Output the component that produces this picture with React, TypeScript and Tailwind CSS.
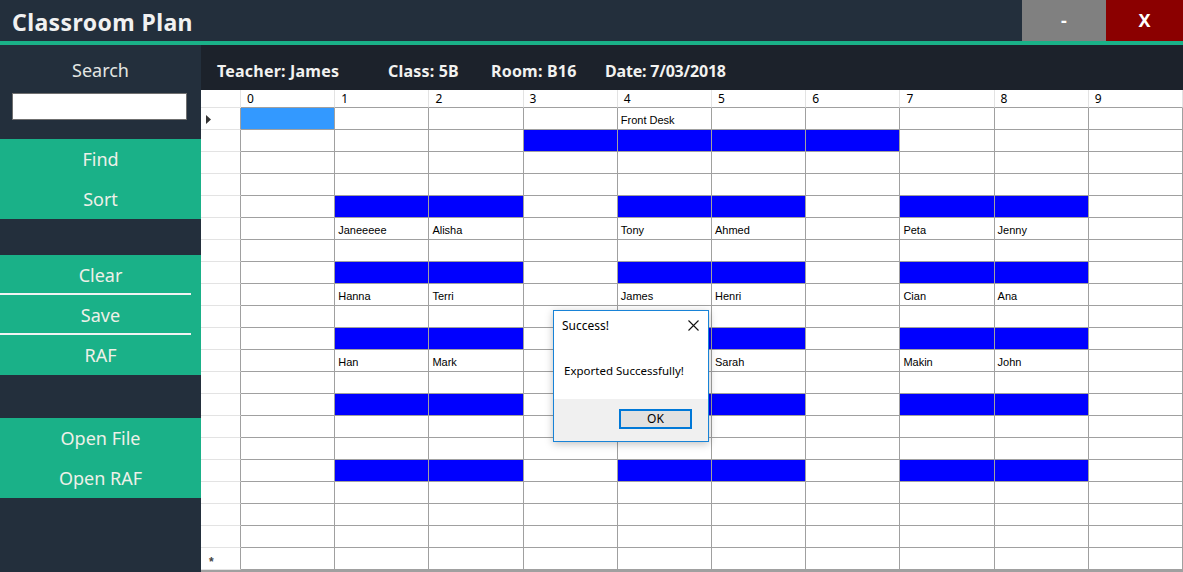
import React from "react";

type Cell = string;
const E: Cell[] = ["", "", "", "", "", "", "", "", "", ""];
const B: Cell[] = ["", "#", "#", "", "#", "#", "", "#", "#", ""];
const rows: Cell[][] = [
  ["@", "", "", "", "Front Desk", "", "", "", "", ""],
  ["", "", "", "#", "#", "#", "#", "", "", ""],
  E,
  E,
  B,
  ["", "Janeeeee", "Alisha", "", "Tony", "Ahmed", "", "Peta", "Jenny", ""],
  E,
  B,
  ["", "Hanna", "Terri", "", "James", "Henri", "", "Cian", "Ana", ""],
  E,
  B,
  ["", "Han", "Mark", "", "", "Sarah", "", "Makin", "John", ""],
  E,
  B,
  E,
  E,
  B,
  E,
  E,
  E,
  E,
];

const gothic = { fontFamily: '"Noto Sans", "DejaVu Sans", sans-serif' };

function SideBtn({ label, line }: { label: string; line?: boolean }) {
  return (
    <div className="relative h-[40px] flex items-center justify-center text-[18px] text-[#eef0e8]">
      {label}
      {line && <div className="absolute left-0 bottom-0 w-[191px] h-[2px] bg-[#f2f2f2]" />}
    </div>
  );
}

export default function App() {
  return (
    <div
      className="relative w-[1183px] h-[572px] overflow-hidden flex flex-col bg-[#232f3c]"
      style={gothic}
    >
      {/* Title bar */}
      <div className="h-[41px] flex bg-[#232f3c]">
        <div className="flex-1 pl-[12px] pt-[3px] flex items-center text-[23px] font-bold text-[#f1f1f1] tracking-[0.4px]">
          Classroom Plan
        </div>
        <div className="w-[84px] bg-[#808080] flex items-center justify-center text-white font-bold text-[18px]">
          -
        </div>
        <div className="w-[77px] bg-[#8b0000] flex items-center justify-center text-white font-bold text-[18px]">
          X
        </div>
      </div>
      <div className="h-[4px] bg-[#1ab188]" />

      {/* Body */}
      <div className="flex flex-1 min-h-0">
        {/* Sidebar */}
        <div className="w-[201px] shrink-0 bg-[#232f3c] flex flex-col">
          <div className="pt-[13px] h-[24px] leading-[24px] text-center text-[18px] text-[#e4e6e2] box-content">
            Search
          </div>
          <div className="mt-[11px] ml-[12px] w-[175px] h-[27px] bg-white border border-[#6f6f6f]" />
          <div className="mt-[19px] bg-[#1ab188]">
            <SideBtn label="Find" />
            <SideBtn label="Sort" />
          </div>
          <div className="mt-[36px] bg-[#1ab188]">
            <SideBtn label="Clear" line />
            <SideBtn label="Save" line />
            <SideBtn label="RAF" />
          </div>
          <div className="mt-[43px] bg-[#1ab188]">
            <SideBtn label="Open File" />
            <SideBtn label="Open RAF" />
          </div>
        </div>

        {/* Main */}
        <div className="flex-1 flex flex-col bg-[#a0a0a0]">
          <div className="h-[45px] bg-[#1c222b] flex pl-[16px] pt-[16px] text-[16px] leading-[20px] font-bold text-[#f2f2f0] tracking-[0.2px]">
            <span className="w-[171px]">Teacher: James</span>
            <span className="w-[103px]">Class: 5B</span>
            <span className="w-[114px]">Room: B16</span>
            <span className="tracking-[-0.2px]">Date: 7/03/2018</span>
          </div>
          <div
            className="grid grid-cols-[40px_repeat(10,1fr)] bg-white"
            style={{ fontFamily: '"Liberation Sans", Arial, sans-serif' }}
          >
            {/* header row */}
            <div className="h-[18px] border-r border-b border-[#e3e3e3]" />
            {Array.from({ length: 10 }, (_, i) => (
              <div
                key={"h" + i}
                className="h-[18px] border-r border-[#e3e3e3] border-b border-b-[#a0a0a0] pl-[6px] text-[12px] leading-[18px] text-black"
                style={{ fontFamily: '"Noto Sans", sans-serif' }}
              >
                {i}
              </div>
            ))}
            {rows.map((r, ri) => (
              <React.Fragment key={ri}>
                <div className="h-[22px] border-r border-r-[#a0a0a0] border-b border-b-[#e3e3e3] flex items-center pl-[5px] pt-[2px] text-[11px] text-[#333]">
                  {ri === 0 && (
                    <svg width="6" height="9" viewBox="0 0 6 9">
                      <path d="M0 0 L5 4.5 L0 9 Z" fill="#333" />
                    </svg>
                  )}
                  {ri === 20 && <span className="pl-[3px] pt-[5px] font-bold text-[12px] text-[#444]">*</span>}
                </div>
                {r.map((c, ci) => (
                  <div
                    key={ci}
                    className={
                      "h-[22px] border-r border-b border-[#a0a0a0] pl-[3px] text-[11px] leading-[24px] text-black whitespace-nowrap overflow-hidden " +
                      (c === "#" ? "bg-[#0000ff]" : c === "@" ? "bg-[#3399ff]" : "bg-white")
                    }
                  >
                    {c === "#" || c === "@" ? "" : c}
                  </div>
                ))}
              </React.Fragment>
            ))}
          </div>
        </div>
      </div>

      {/* Dialog */}
      <div
        className="absolute left-[553px] top-[310px] w-[156px] h-[132px] border border-[#1883d7] bg-white flex flex-col shadow-[0_2px_8px_rgba(0,0,0,0.25)]"
        style={{ fontFamily: '"Noto Sans", "Open Sans", sans-serif' }}
      >
        <div className="h-[29px] flex items-center justify-between pl-[8px] pr-[9px] text-[12px] text-black">
          <span>Success!</span>
          <svg width="11" height="11" viewBox="0 0 11 11">
            <path d="M0.5 0.5 L10.5 10.5 M10.5 0.5 L0.5 10.5" stroke="#111" strokeWidth="1.1" />
          </svg>
        </div>
        <div className="flex-1 pl-[10px] pt-[22px] text-[11.5px] text-black">Exported Successfully!</div>
        <div className="h-[42px] bg-[#f0f0f0] flex items-start justify-end pr-[16px] pt-[10px]">
          <div className="w-[73px] h-[20px] border-2 border-[#0078d7] bg-[#e1e1e1] flex items-center justify-center text-[12px] text-black">
            OK
          </div>
        </div>
      </div>
    </div>
  );
}
